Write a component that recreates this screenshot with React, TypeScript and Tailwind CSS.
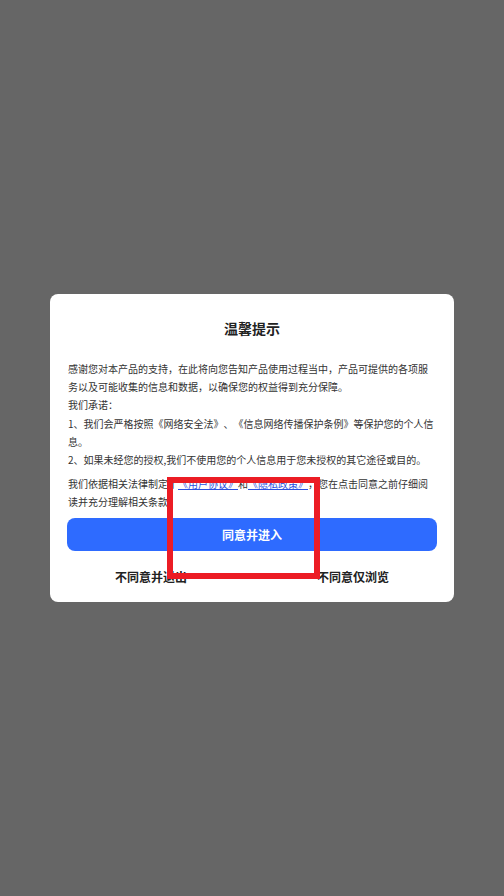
export default function App() {
  return (
    <div
      className="relative w-[504px] h-[896px] bg-[#666666] flex items-center justify-center [text-spacing-trim:space-all]"
      style={{ fontFamily: '"Noto Sans CJK SC", "Noto Sans", sans-serif' }}
    >
      <div className="w-[404px] bg-white rounded-[8px] pt-[24px] pb-[15px]">
        <h2 className="text-center text-[14px] leading-[20px] font-bold text-[#222]">温馨提示</h2>

        <div className="px-[18px] mt-[22px] text-[10px] leading-[18.3px] text-[#333]">
          <p>
            感谢您对本产品的支持，在此将向您告知产品使用过程当中，产品可提供的各项服务以及可能收集的信息和数据，以确保您的权益得到充分保障。
          </p>
          <p>我们承诺：</p>
          <p>1、我们会严格按照《网络安全法》、《信息网络传播保护条例》等保护您的个人信息。</p>
          <p>2、如果未经您的授权,我们不使用您的个人信息用于您未授权的其它途径或目的。</p>
          <p className="mt-[5px]">
            我们依据相关法律制定了
            <span className="text-[#2b50e0] underline">《用户协议》</span>和
            <span className="text-[#2b50e0] underline">《隐私政策》</span>
            ，您在点击同意之前仔细阅读并充分理解相关条款。
          </p>
        </div>

        <div className="px-[17px] mt-[7px]">
          <button className="w-full h-[33px] rounded-[8px] bg-[#2e6bff] text-white text-[12px] font-bold">
            同意并进入
          </button>
        </div>

        <div className="flex mt-[16px]">
          <button className="flex-1 text-[12px] leading-[20px] font-bold text-[#222]">不同意并退出</button>
          <button className="flex-1 text-[12px] leading-[20px] font-bold text-[#222]">不同意仅浏览</button>
        </div>
      </div>

      {/* red highlight frame drawn over the dialog */}
      <div className="absolute left-[167px] top-[477px] w-[153px] h-[102px] border-[6px] border-[#ec1c24]" />
    </div>
  )
}
